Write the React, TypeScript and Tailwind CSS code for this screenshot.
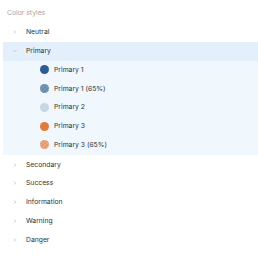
import React from "react";

function Chevron({ open }: { open?: boolean }) {
  return (
    <svg width="6" height="6" viewBox="0 0 6 6" className="shrink-0">
      {open ? (
        <path d="M1.5 2.2 L3 3.7 L4.5 2.2" fill="none" stroke="#b8bcc2" strokeWidth="0.8" />
      ) : (
        <path d="M2.2 1.5 L3.7 3 L2.2 4.5" fill="none" stroke="#b8bcc2" strokeWidth="0.8" />
      )}
    </svg>
  );
}

function Group({ label, open }: { label: string; open?: boolean }) {
  return (
    <div className={`flex items-center h-[18.75px] pl-[9px] gap-[8px] ${open ? "bg-[#e3effb]" : ""}`}>
      <Chevron open={open} />
      <span className="text-[6.8px] text-[#2e3338]">{label}</span>
    </div>
  );
}

function Swatch({ label, color, alpha }: { label: string; color: string; alpha?: boolean }) {
  return (
    <div className="flex items-center h-[18.75px] pl-[37px] gap-[5px]">
      <div className="relative w-[9px] h-[9px] rounded-full overflow-hidden shrink-0" style={{ background: alpha ? "#ffffff" : color }}>
        {alpha && (
          <>
            <div
              className="absolute inset-0"
              style={{
                backgroundImage:
                  "linear-gradient(45deg,#d9d9d9 25%,transparent 25%,transparent 75%,#d9d9d9 75%),linear-gradient(45deg,#d9d9d9 25%,transparent 25%,transparent 75%,#d9d9d9 75%)",
                backgroundSize: "4px 4px",
                backgroundPosition: "0 0,2px 2px",
              }}
            />
            <div className="absolute inset-0" style={{ background: color, opacity: 0.65 }} />
          </>
        )}
      </div>
      <span className="text-[6.8px] text-[#2e3338]">{label}</span>
    </div>
  );
}

export default function App() {
  return (
    <div className="w-[258px] h-[258px] bg-white pt-[7px] overflow-hidden" style={{ fontFamily: "Inter, 'Noto Sans', sans-serif" }}>
      <div className="pl-[7px] h-[12px] flex items-center text-[6.8px] text-[#a3a7ab]">Color styles</div>
      <div className="mt-[4px] pl-[3px]">
        <Group label="Neutral" />
        <Group label="Primary" open />
        <div className="bg-[#f0f7fd] pb-[1px]">
          <Swatch label="Primary 1" color="#2b5d93" />
          <Swatch label="Primary 1 (65%)" color="#2b5d93" alpha />
          <Swatch label="Primary 2" color="#c8d5e3" />
          <Swatch label="Primary 3" color="#e17a3a" />
          <Swatch label="Primary 3 (65%)" color="#e17a3a" alpha />
        </div>
        <Group label="Secondary" />
        <Group label="Success" />
        <Group label="Information" />
        <Group label="Warning" />
        <Group label="Danger" />
      </div>
    </div>
  );
}
